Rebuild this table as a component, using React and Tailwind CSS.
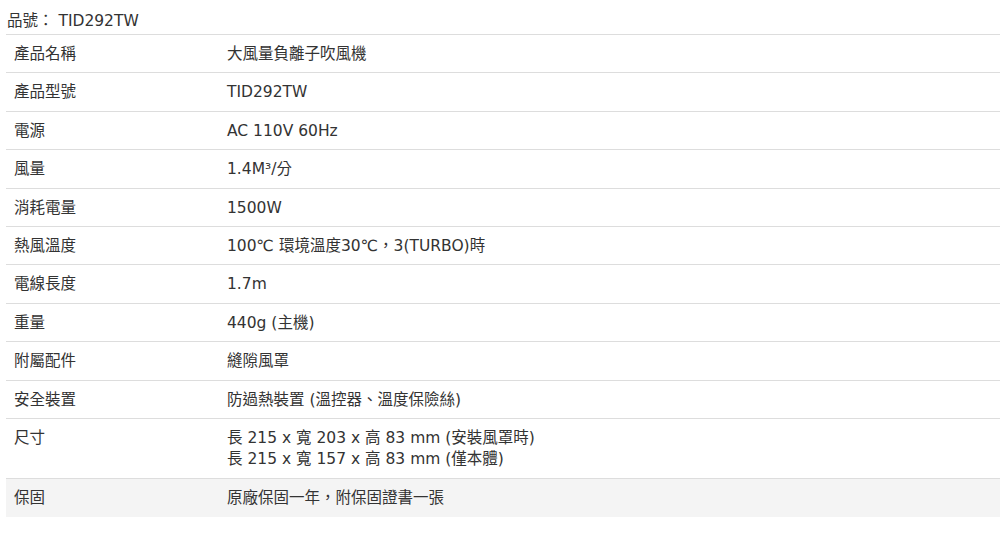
const rows = [
  ["產品名稱", ["大風量負離子吹風機"]],
  ["產品型號", ["TID292TW"]],
  ["電源", ["AC 110V 60Hz"]],
  ["風量", ["1.4M³/分"]],
  ["消耗電量", ["1500W"]],
  ["熱風溫度", ["100℃ 環境溫度30℃，3(TURBO)時"]],
  ["電線長度", ["1.7m"]],
  ["重量", ["440g (主機)"]],
  ["附屬配件", ["縫隙風罩"]],
  ["安全裝置", ["防過熱裝置 (溫控器、溫度保險絲)"]],
  ["尺寸", ["長 215 x 寬 203 x 高 83 mm (安裝風罩時)", "長 215 x 寬 157 x 高 83 mm (僅本體)"]],
];

export default function App() {
  return (
    <div
      className="w-[1000px] h-[544px] bg-white text-[#333] pl-[6px] overflow-hidden"
      style={{ fontFamily: '"DejaVu Sans", "Noto Sans CJK TC", sans-serif' }}
    >
      <div className="h-[35px] pt-[10px] leading-[22px] text-[15.5px] pl-[1px] border-b border-[#dddddd]">
        品號： TID292TW
      </div>
      <div className="flex flex-col text-[15.5px]">
        {rows.map(([k, v]) => (
          <div key={k} className="flex border-b border-[#dddddd] pt-[9px] pb-[7px]">
            <div className="w-[213px] pl-[8px] leading-[21.4px]">{k}</div>
            <div className="flex-1 pl-[8px] leading-[21.4px]">
              {v.map((line, i) => (
                <div key={i}>{line}</div>
              ))}
            </div>
          </div>
        ))}
        <div className="flex bg-[#f4f4f4] pt-[9px] pb-[7px] h-[38px]">
          <div className="w-[213px] pl-[8px] leading-[21.4px]">保固</div>
          <div className="flex-1 pl-[8px] leading-[21.4px]">原廠保固一年，附保固證書一張</div>
        </div>
      </div>
    </div>
  );
}
